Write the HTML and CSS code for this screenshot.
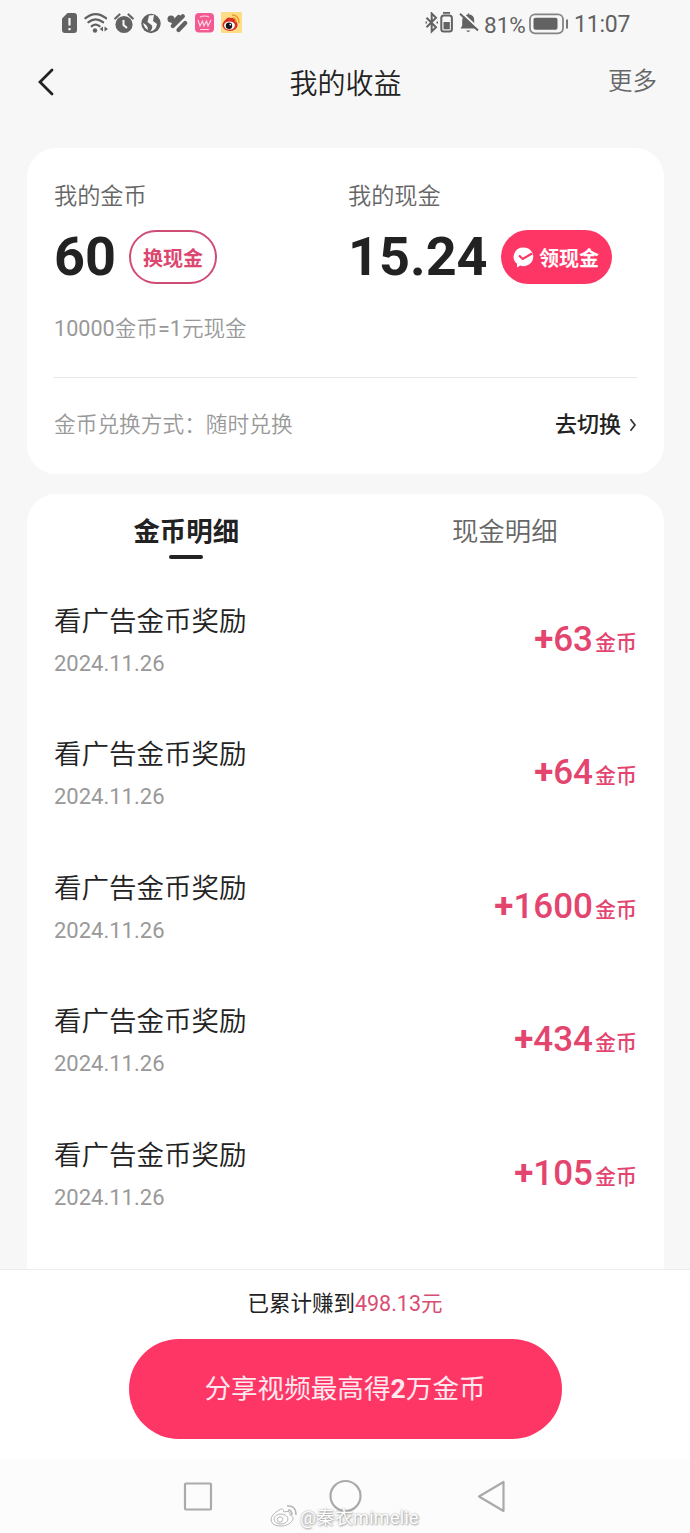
FILE: index.html
```html
<!DOCTYPE html>
<html lang="zh-CN">
<head>
<meta charset="utf-8">
<title>我的收益</title>
<link rel="stylesheet" href="styles.css">
</head>
<body>
<div class="phone">
  <div class="status">
    <svg class="status-left" width="184" height="24" viewBox="60 0 184 24">
      <g fill="#626262">
        <path d="M67.500 1H74q3 0 3 3v14q0 3-3 3H65q-3 0-3-3V6.500z"/>
        <path d="M69.500 6v7.500M69.500 16v2.200" stroke="#f7f7f7" stroke-width="2.200"/>
        <g fill="none" stroke="#626262" stroke-width="2.300" stroke-linecap="round">
          <path d="M85.500 6.200Q95.500-2 106 6.200M88.500 10.200Q95.500 4.500 103 10.200M91.800 14.200Q95.500 11 99.500 14.200"/>
        </g>
        <circle cx="95" cy="18.500" r="2.200"/>
        <path d="M103 14.500v5l-3.300-2.500zM104.500 14.500v5l3.500-2.500z"/>
        <circle cx="124" cy="12.500" r="8.600"/>
        <path d="M115.200 6.500l4.300-4M132.800 6.500l-4.300-4" stroke="#626262" stroke-width="2.200" stroke-linecap="round"/>
        <path d="M123.500 8v5l3.500 3" fill="none" stroke="#f7f7f7" stroke-width="2"/>
        <circle cx="151" cy="11.500" r="9.700"/>
        <path d="M149 3.500l5-.5-1 6 4 3q-1 7-7 7.500 3-3 2-6l-4.500-3.500z" fill="#f7f7f7"/>
        <path d="M143 11q5 2 5 7-4-2-5-7z" fill="#f7f7f7"/>
        <g fill="none" stroke="#626262" stroke-linecap="round" stroke-width="4.300">
          <path d="M170 6.500l3.800 3.800 5-5.300M172.800 14l10-9.800M178.500 18l6.700-7"/>
        </g>
        <circle cx="171" cy="7" r="3.500"/>
      </g>
      <rect x="195" y="1" width="19" height="19.500" rx="4" fill="#f45a92"/>
      <path d="M198 8l2 6 2.500-5 1.500 5 2.500-5 1.500 5 3-6M200 5q5-2 9 0M200 17.500h9" fill="none" stroke="#ffd5e4" stroke-width="1.200"/>
      <rect x="221" y="0" width="21" height="21" rx="1" fill="#ffdd87"/>
      <ellipse cx="230" cy="13" rx="7.600" ry="6" fill="#d72f25"/>
      <path d="M224 10q3-6 7-4 5-1 5 4" fill="#d72f25"/>
      <ellipse cx="229.500" cy="13.500" rx="5.400" ry="4.100" fill="#fff"/>
      <circle cx="229" cy="13.800" r="3.200" fill="#151515"/><circle cx="230.300" cy="12.600" r=".9" fill="#fff"/>
      <path d="M232 3q7 0 7 8M233 6q3 0 3 4" fill="none" stroke="#ee9d2d" stroke-width="1.500"/>
    </svg>
    <div class="status-right">
      <svg width="56" height="24" viewBox="424 0 56 24" fill="none" stroke="#626262" stroke-width="2">
        <path d="M426.500 5.800l9.500 9.500-4.300 4.200V1.500l4.300 4.300-9.500 9.500M425.500 10.500h1.500M436.500 10.500h1.500"/>
        <path d="M443 .8h7" stroke-width="2"/>
        <rect x="441.300" y="3.600" width="10.600" height="15.800" rx="2.500"/>
        <rect x="443.500" y="10" width="6.300" height="7.300" fill="#626262" stroke="none"/>
        <path d="M460.500 16.500h16l-2.300-3V8.500q0-5.500-5-6v-1h-1.500v1q-5.500.8-5.500 6v5zM466 18.500h4.500l-2.200 1.800z" fill="#626262" stroke="none"/>
        <path d="M461.500 .5l17.500 16.500" stroke="#f7f7f7" stroke-width="2"/><path d="M460 1.800L478 18.500"/>
      </svg>
      <span class="pct">81%</span>
      <svg class="battery" width="40" height="22" viewBox="0 0 40 22">
        <rect x="1" y="1.300" width="33" height="19" rx="5" fill="none" stroke="#858585" stroke-width="1.800"/>
        <rect x="4.500" y="4.800" width="24" height="12" rx="2" fill="#626262"/>
        <path d="M38 6.500v9" stroke="#777" stroke-width="2"/>
      </svg>
      <span class="clock">11:07</span>
    </div>
  </div>
  <header class="nav">
    <svg class="back" width="18" height="28" viewBox="0 0 18 28"><path d="M15 2L3 14l12 12" fill="none" stroke="#222" stroke-width="2.800" stroke-linecap="round"/></svg>
    <h1>我的收益</h1>
    <span class="more">更多</span>
  </header>
  <section class="card balance">
    <div class="accounts">
      <div class="account">
        <div class="label">我的金币</div>
        <div class="value"><b>60</b><span class="pill outline">换现金</span></div>
      </div>
      <div class="account">
        <div class="label">我的现金</div>
        <div class="value"><b>15.24</b><span class="pill solid"><svg width="21" height="21" viewBox="0 0 21 21"><path d="M10.500 .5a9.800 9.300 0 1 1-3.200 18.100L4 20.500v-3.700A9.700 9.300 0 0 1 10.500 .5z" fill="#fff"/><path d="M6 8.500l3.700 3.500L19 6.500" fill="none" stroke="#fe3666" stroke-width="2.200"/></svg>领现金</span></div>
      </div>
    </div>
    <div class="rate"><span class="num">10000</span>金币<span class="num">=1</span>元现金</div>
    <div class="mode"><span>金币兑换方式：随时兑换</span><span class="switch">去切换<svg width="8" height="14" viewBox="0 0 8 14"><path d="M1.500 1.200L6 7l-4.500 5.800" fill="none" stroke="#333" stroke-width="1.700"/></svg></span></div>
  </section>
  <section class="card details">
    <div class="tabs"><div class="tab active">金币明细</div><div class="tab">现金明细</div></div>
    <div class="row"><div><div class="name">看广告金币奖励</div><div class="date">2024.11.26</div></div><div class="amount"><b>+</b>63<small>金币</small></div></div>
    <div class="row"><div><div class="name">看广告金币奖励</div><div class="date">2024.11.26</div></div><div class="amount"><b>+</b>64<small>金币</small></div></div>
    <div class="row"><div><div class="name">看广告金币奖励</div><div class="date">2024.11.26</div></div><div class="amount"><b>+</b>1600<small>金币</small></div></div>
    <div class="row"><div><div class="name">看广告金币奖励</div><div class="date">2024.11.26</div></div><div class="amount"><b>+</b>434<small>金币</small></div></div>
    <div class="row"><div><div class="name">看广告金币奖励</div><div class="date">2024.11.26</div></div><div class="amount"><b>+</b>105<small>金币</small></div></div>
  </section>
  <footer class="share">
    <div class="total">已累计赚到<span>498.13元</span></div>
    <div class="cta"><span>分享视频最高得<b>2</b>万金币</span></div>
  </footer>
  <div class="sysnav">
    <svg width="690" height="74" viewBox="0 0 690 74" fill="none" stroke="#aaa" stroke-width="2.200" stroke-linejoin="round">
      <rect x="185" y="24.500" width="26" height="26" rx="1"/>
      <circle cx="345.500" cy="37" r="15"/>
      <path d="M503.500 23v29L479 37.500z"/>
    </svg>
    <div class="watermark">
      <svg width="28" height="24" viewBox="0 0 28 24" fill="#fff" stroke="#b5b5b5" stroke-width="1"><path d="M9 6Q13 3 14 8q7-2 6 3 5 2 2 6-4 5-11 5-9 0-10-6Q1 11 9 6z"/><ellipse cx="11" cy="15" rx="7" ry="5"/><circle cx="10" cy="15.500" r="2.700"/><path d="M17 2q9-1 9 9M18 6q4 0 4 5" fill="none" stroke-width="1.500"/></svg>
      <span>@秦衣mimelie</span>
    </div>
  </div>
</div>
</body>
</html>
```
FILE: styles.css
```css
* { box-sizing: border-box; }
body { margin: 0; background: #f7f7f7; font-family: Roboto, "Noto Sans CJK SC", sans-serif; color: #222; font-weight: 350; }
svg { display: block; flex: none; }
.phone { width: 690px; height: 1533px; overflow: hidden; display: flex; flex-direction: column; }
.status { height: 50px; flex: none; padding: 12px 60px 0; display: flex; justify-content: space-between; }
.status-right { display: flex; height: 24px; align-items: center; color: #626262; font-weight: 400; font-size: 22.5px; line-height: 24px; white-space: nowrap; }
.pct { margin-left: 4px; width: 45px; padding-top: 1px; }
.battery { margin-right: 5px; }
.clock { font-size: 23px; width: 56px; padding-top: 2px; letter-spacing: -.2px; }
.nav { height: 64px; flex: none; padding: 0 33px 0 37px; display: grid; grid-template-columns: 60px 1fr 60px; align-items: center; }
h1 { margin: 0; padding: 5px 3px 0 0; font-size: 28px; line-height: 40px; font-weight: 350; text-align: center; }
.more { font-size: 24.5px; line-height: 36px; color: #666; text-align: right; padding-bottom: 1px; }
.card { margin: 0 26px 0 27px; background: #fff; border-radius: 29px; flex: none; padding: 0 27px; }
.balance { margin-top: 34px; height: 326px; }
.accounts { display: grid; grid-template-columns: 294px 1fr; padding-top: 31px; }
.label { font-size: 23.2px; line-height: 34px; color: #666; }
.value { display: flex; align-items: center; height: 54px; margin-top: 17px; white-space: nowrap; }
.value b { font-size: 54px; line-height: 54px; font-weight: 700; }
.pill { height: 54px; border-radius: 27px; display: flex; align-items: center; justify-content: center; font-size: 20px; font-weight: 700; }
.outline { width: 88px; border: 2px solid #cf4c74; color: #dc4770; margin-left: 13px; }
.solid { width: 111px; background: #fe3666; color: #fff; gap: 5px; margin-left: 13px; }
.rate { margin-top: 29px; font-size: 21.6px; line-height: 32px; color: #999; }
.num { font-weight: 400; }
.mode { margin-top: 32px; border-top: 1px solid #e6e6e6; height: 92px; padding-bottom: 3px; display: flex; align-items: center; justify-content: space-between; font-size: 21.7px; color: #999; }
.switch { display: flex; align-items: center; gap: 8px; color: #222; font-weight: 500; font-size: 22px; }
.switch svg { margin-top: 6px; }
.details { margin-top: 20px; height: 775px; border-radius: 29px 29px 0 0; }
.tabs { height: 66px; margin: 0 -27px; display: grid; grid-template-columns: 1fr 1fr; }
.tab { font-size: 26.4px; line-height: 38px; text-align: center; padding-top: 19px; color: #666; font-weight: 350; }
.tab.active { font-weight: 700; color: #222; }
.tab.active::after { content: ""; display: block; width: 34px; height: 4px; border-radius: 2px; background: #222; margin: 4px auto 0; }
.row { height: 133.5px; display: flex; justify-content: space-between; padding-top: 41.500px; }
.name { font-size: 27.5px; line-height: 40px; color: #222; }
.date { font-size: 22px; line-height: 30px; margin-top: 7px; color: #999; font-weight: 400; }
.amount { font-size: 35px; line-height: 42px; height: 42px; margin-top: 17px; color: #e3456f; font-weight: 500; display: flex; align-items: baseline; }
.amount b { font-weight: 700; }
.amount small { font-size: 21px; font-weight: 500; margin-left: 2px; position: relative; top: -1px; }
.share { height: 190px; flex: none; background: #fff; border-top: 1px solid #ececec; display: flex; flex-direction: column; align-items: center; }
.total { margin-top: 17px; font-size: 21.5px; line-height: 34px; font-weight: 400; }
.total span { color: #d94d75; }
.cta { margin-top: 18px; width: 433px; height: 100px; padding-bottom: 6px; border-radius: 50px; background: #fe3666; color: #ffe9ef; display: flex; align-items: center; justify-content: center; font-size: 26.6px; font-weight: 400; }
.cta b { font-weight: 700; }
.sysnav { height: 75px; flex: none; background: #fcfcfc; position: relative; }
.watermark { position: absolute; left: 270px; top: 43px; display: flex; gap: 2px; align-items: center; white-space: nowrap; height: 28px; font-size: 18px; letter-spacing: .3px; font-weight: 400; color: #fff; text-shadow: 0 0 2px #999, 1px 1px 2px #aaa; }
```
